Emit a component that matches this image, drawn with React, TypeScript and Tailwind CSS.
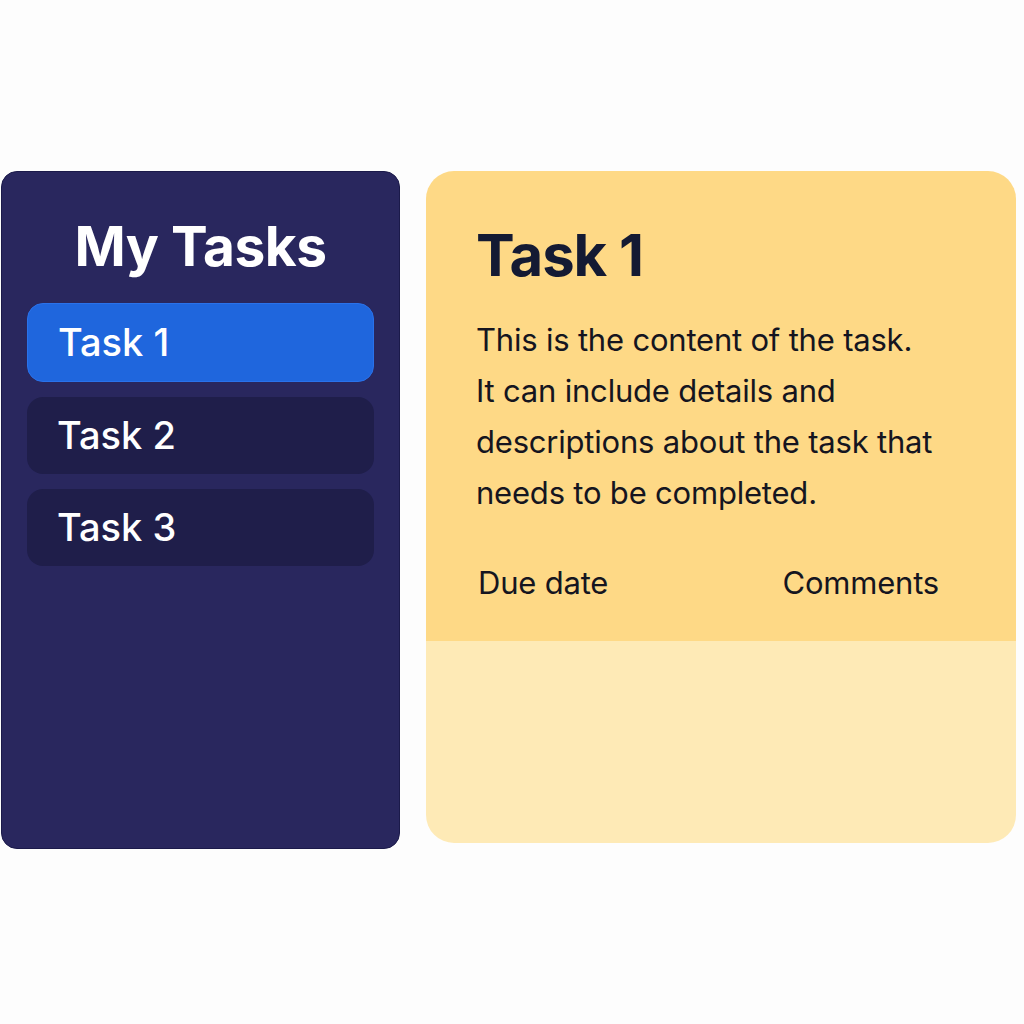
const tasks = ["Task 1", "Task 2", "Task 3"];

function App() {
  return (
    <div className="w-[1024px] h-[1024px] bg-[#fdfdfd] font-['Inter',sans-serif]">
      <div className="flex items-start gap-[26px] pt-[171px] pl-px">
        {/* sidebar */}
        <div className="w-[399px] h-[678px] rounded-[16px] bg-[#29275e] border border-[#1b1a4a] px-[25px]">
          <h1 className="mt-[39px] text-center text-[55px] leading-[70px] font-bold tracking-[-0.5px] text-white">
            My Tasks
          </h1>
          <div className="mt-[22px] flex flex-col gap-[15px]">
            {tasks.map((t, i) => (
              <div
                key={t}
                className={
                  i === 0
                    ? "h-[79px] rounded-[16px] bg-[#1f66dd] border border-[#2a72ea] flex items-center px-[30px] text-[38px] font-medium text-white"
                    : "h-[77px] rounded-[16px] bg-[#1f1e4a] flex items-center px-[30px] text-[38px] font-medium text-white"
                }
              >
                {t}
              </div>
            ))}
          </div>
        </div>

        {/* detail card */}
        <div className="w-[590px] h-[672px] rounded-[28px] overflow-hidden flex flex-col">
          <div className="h-[470px] bg-[#fed986] pl-[50px] pr-[50px]">
            <h2 className="mt-[48px] text-[58px] leading-[72px] font-bold tracking-[-1px] text-[#141a33]">
              Task 1
            </h2>
            <p className="mt-[23px] text-[31px] leading-[51px] text-[#15151f] tracking-[-0.2px]">
              This is the content of the task.
              <br />
              It can include details and
              <br />
              descriptions about the task that
              <br />
              needs to be completed.
            </p>
            <div className="mt-[45px] flex justify-between pl-[2px] pr-[27px] text-[31px] leading-[40px] text-[#15151f] tracking-[-0.2px]">
              <span>Due date</span>
              <span>Comments</span>
            </div>
          </div>
          <div className="flex-1 bg-[#feeab6]" />
        </div>
      </div>
    </div>
  );
}

export default App;
